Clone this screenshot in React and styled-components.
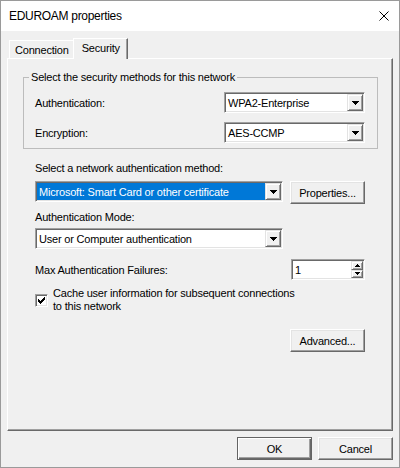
import React from 'react';
import styled, { createGlobalStyle } from 'styled-components';

const Global = createGlobalStyle`
  html, body { margin: 0; padding: 0; background: #fff; }
  body {
    font-family: "Liberation Sans", Arial, sans-serif;
    font-size: 11px; letter-spacing: -0.2px; color: #000;
  }
  * { box-sizing: border-box; }
`;

const Window = styled.div`
  width: 400px; height: 468px;
  border: 1px solid #9a9a9a;
  background: #f0f0f0;
  display: flex; flex-direction: column;
`;

const TitleBar = styled.div`
  height: 30px; flex-shrink: 0;
  background: #fff;
  display: flex; align-items: center; justify-content: space-between;
  padding: 0 10px 0 8px;
  font-size: 12px; letter-spacing: -0.3px;
`;

const Body = styled.div`
  flex: 1;
  display: flex; flex-direction: column;
  padding: 7px 6px 7px 6px;
`;

const TabStrip = styled.div`
  display: flex; align-items: flex-end;
  height: 20px; padding-left: 2px;
  position: relative; z-index: 1;
`;

const Tab = styled.div`
  height: ${p => (p.$active ? 21 : 18)}px;
  margin: 0 ${p => (p.$active ? -2 : 0)}px ${p => (p.$active ? -1 : 0)}px;
  padding: ${p => (p.$active ? '0 7px 2px 8px' : '0 5px')};
  display: flex; align-items: center;
  background: #f0f0f0;
  border-top: 1px solid #fff;
  border-left: 1px solid #fff;
  border-right: 1px solid #696969;
  box-shadow: inset -1px 0 #a0a0a0;
  position: relative;
  z-index: ${p => (p.$active ? 2 : 1)};
`;

const Panel = styled.div`
  flex: 1;
  display: flex; flex-direction: column;
  border-top: 1px solid #fff;
  border-left: 1px solid #fff;
  border-right: 1px solid #696969;
  border-bottom: 1px solid #696969;
  box-shadow: inset -1px -1px #a0a0a0;
`;

const Group = styled.fieldset`
  margin: 12px 14px 0 15px;
  padding: 8px 12px 5px 11px;
  border: 1px solid #bcbcbc;
  min-width: 0;
`;

const Legend = styled.legend`
  margin-left: -6px;
  padding: 0 2px;
  line-height: 13px;
`;

const FieldRow = styled.div`
  display: flex; align-items: center; justify-content: space-between;
  & + & { margin-top: 9px; }
`;

const Section = styled.div`
  display: flex; flex-direction: column;
  padding: 0 27px;
`;

const Label = styled.div`
  line-height: 13px;
  margin-top: ${p => p.$top || 0}px;
`;

const Row = styled.div`
  display: flex; align-items: ${p => p.$align || 'center'};
  justify-content: ${p => p.$justify || 'space-between'};
  margin-top: ${p => p.$top || 0}px;
`;

const Sunken = styled.div`
  width: ${p => p.$w}px; height: 21px;
  display: flex;
  background: #fff;
  border: 1px solid;
  border-color: #a0a0a0 #fff #fff #a0a0a0;
  box-shadow: inset 1px 1px #696969, inset -1px -1px #e3e3e3;
  padding: 1px;
`;

const ComboText = styled.div`
  flex: 1;
  display: flex; align-items: center;
  padding-left: 2px;
  white-space: nowrap; overflow: hidden;
  background: ${p => (p.$selected ? '#0078d7' : 'transparent')};
  color: ${p => (p.$selected ? '#fff' : '#000')};
`;

const Raised = styled.div`
  width: ${p => p.$w || 16}px;
  flex: ${p => (p.$fill ? 1 : 'none')};
  background: #f0f0f0;
  border: 1px solid;
  border-color: #e3e3e3 #696969 #696969 #e3e3e3;
  box-shadow: inset 1px 1px #fff, inset -1px -1px #a0a0a0;
  display: flex; align-items: center; justify-content: center;
`;

const SpinCol = styled.div`
  display: flex; flex-direction: column;
  width: 12px;
`;

const Button = styled.button`
  width: 75px; height: 23px;
  padding: 0;
  font: inherit; letter-spacing: inherit; color: #000;
  background: #f0f0f0;
  border: 1px solid;
  border-color: ${p => (p.$default ? '#646464' : '#fff #696969 #696969 #fff')};
  box-shadow: ${p =>
    p.$default
      ? 'inset 1px 1px #fff, inset -1px -1px #696969, inset -2px -2px #a0a0a0'
      : 'inset -1px -1px #a0a0a0, inset 1px 1px #e3e3e3'};
`;

const CheckRow = styled.div`
  display: flex; align-items: center; gap: 5px;
  margin-top: 7px;
`;

const CheckBox = styled.div`
  width: 13px; height: 13px; flex-shrink: 0;
  background: #fff;
  border: 1px solid;
  border-color: #a0a0a0 #fff #fff #a0a0a0;
  box-shadow: inset 1px 1px #696969, inset -1px -1px #e3e3e3;
  display: flex; align-items: center; justify-content: center;
`;

const Footer = styled.div`
  display: flex; justify-content: flex-end; gap: 6px;
  margin-top: 6px;
`;

const Arrow = ({ up, w = 7, h = 4 }) => (
  <svg width={w} height={h} shapeRendering="crispEdges">
    <polygon points={up ? `0,${h} ${w},${h} ${w / 2},0` : `0,0 ${w},0 ${w / 2},${h}`} fill="#000" />
  </svg>
);

const Combo = ({ w, value, selected }) => (
  <Sunken $w={w}>
    <ComboText $selected={selected}>{value}</ComboText>
    <Raised>
      <Arrow />
    </Raised>
  </Sunken>
);

export default function App() {
  return (
    <>
      <Global />
      <Window>
        <TitleBar>
          <span>EDUROAM properties</span>
          <svg width="10" height="10" viewBox="0 0 10 10">
            <path d="M0.5 0.5 L9.5 9.5 M9.5 0.5 L0.5 9.5" stroke="#000" strokeWidth="1" />
          </svg>
        </TitleBar>
        <Body>
          <TabStrip>
            <Tab>Connection</Tab>
            <Tab $active>Security</Tab>
          </TabStrip>
          <Panel>
            <Group>
              <Legend>Select the security methods for this network</Legend>
              <FieldRow>
                <span>Authentication:</span>
                <Combo w={141} value="WPA2-Enterprise" />
              </FieldRow>
              <FieldRow>
                <span>Encryption:</span>
                <Combo w={141} value="AES-CCMP" />
              </FieldRow>
            </Group>
            <Section>
              <Label $top={13}>Select a network authentication method:</Label>
              <Row $top={6} $align="flex-start">
                <Combo w={248} value="Microsoft: Smart Card or other certificate" selected />
                <Button>Properties...</Button>
              </Row>
              <Label $top={7}>Authentication Mode:</Label>
              <Row $top={4}>
                <Combo w={248} value="User or Computer authentication" />
              </Row>
              <Row $top={10}>
                <span>Max Authentication Failures:</span>
                <Sunken $w={74}>
                  <ComboText>1</ComboText>
                  <SpinCol>
                    <Raised $w={12} $fill><Arrow up w={5} h={3} /></Raised>
                    <Raised $w={12} $fill><Arrow w={5} h={3} /></Raised>
                  </SpinCol>
                </Sunken>
              </Row>
              <CheckRow>
                <CheckBox>
                  <svg width="7" height="7" shapeRendering="crispEdges">
                    <path d="M0 2 L2 4 L7 -1 L7 2 L2 7 L0 5 Z" fill="#000" />
                  </svg>
                </CheckBox>
                <Label>
                  Cache user information for subsequent connections
                  <br />
                  to this network
                </Label>
              </CheckRow>
              <Row $top={16} $justify="flex-end">
                <Button>Advanced...</Button>
              </Row>
            </Section>
          </Panel>
          <Footer>
            <Button $default>OK</Button>
            <Button>Cancel</Button>
          </Footer>
        </Body>
      </Window>
    </>
  );
}
